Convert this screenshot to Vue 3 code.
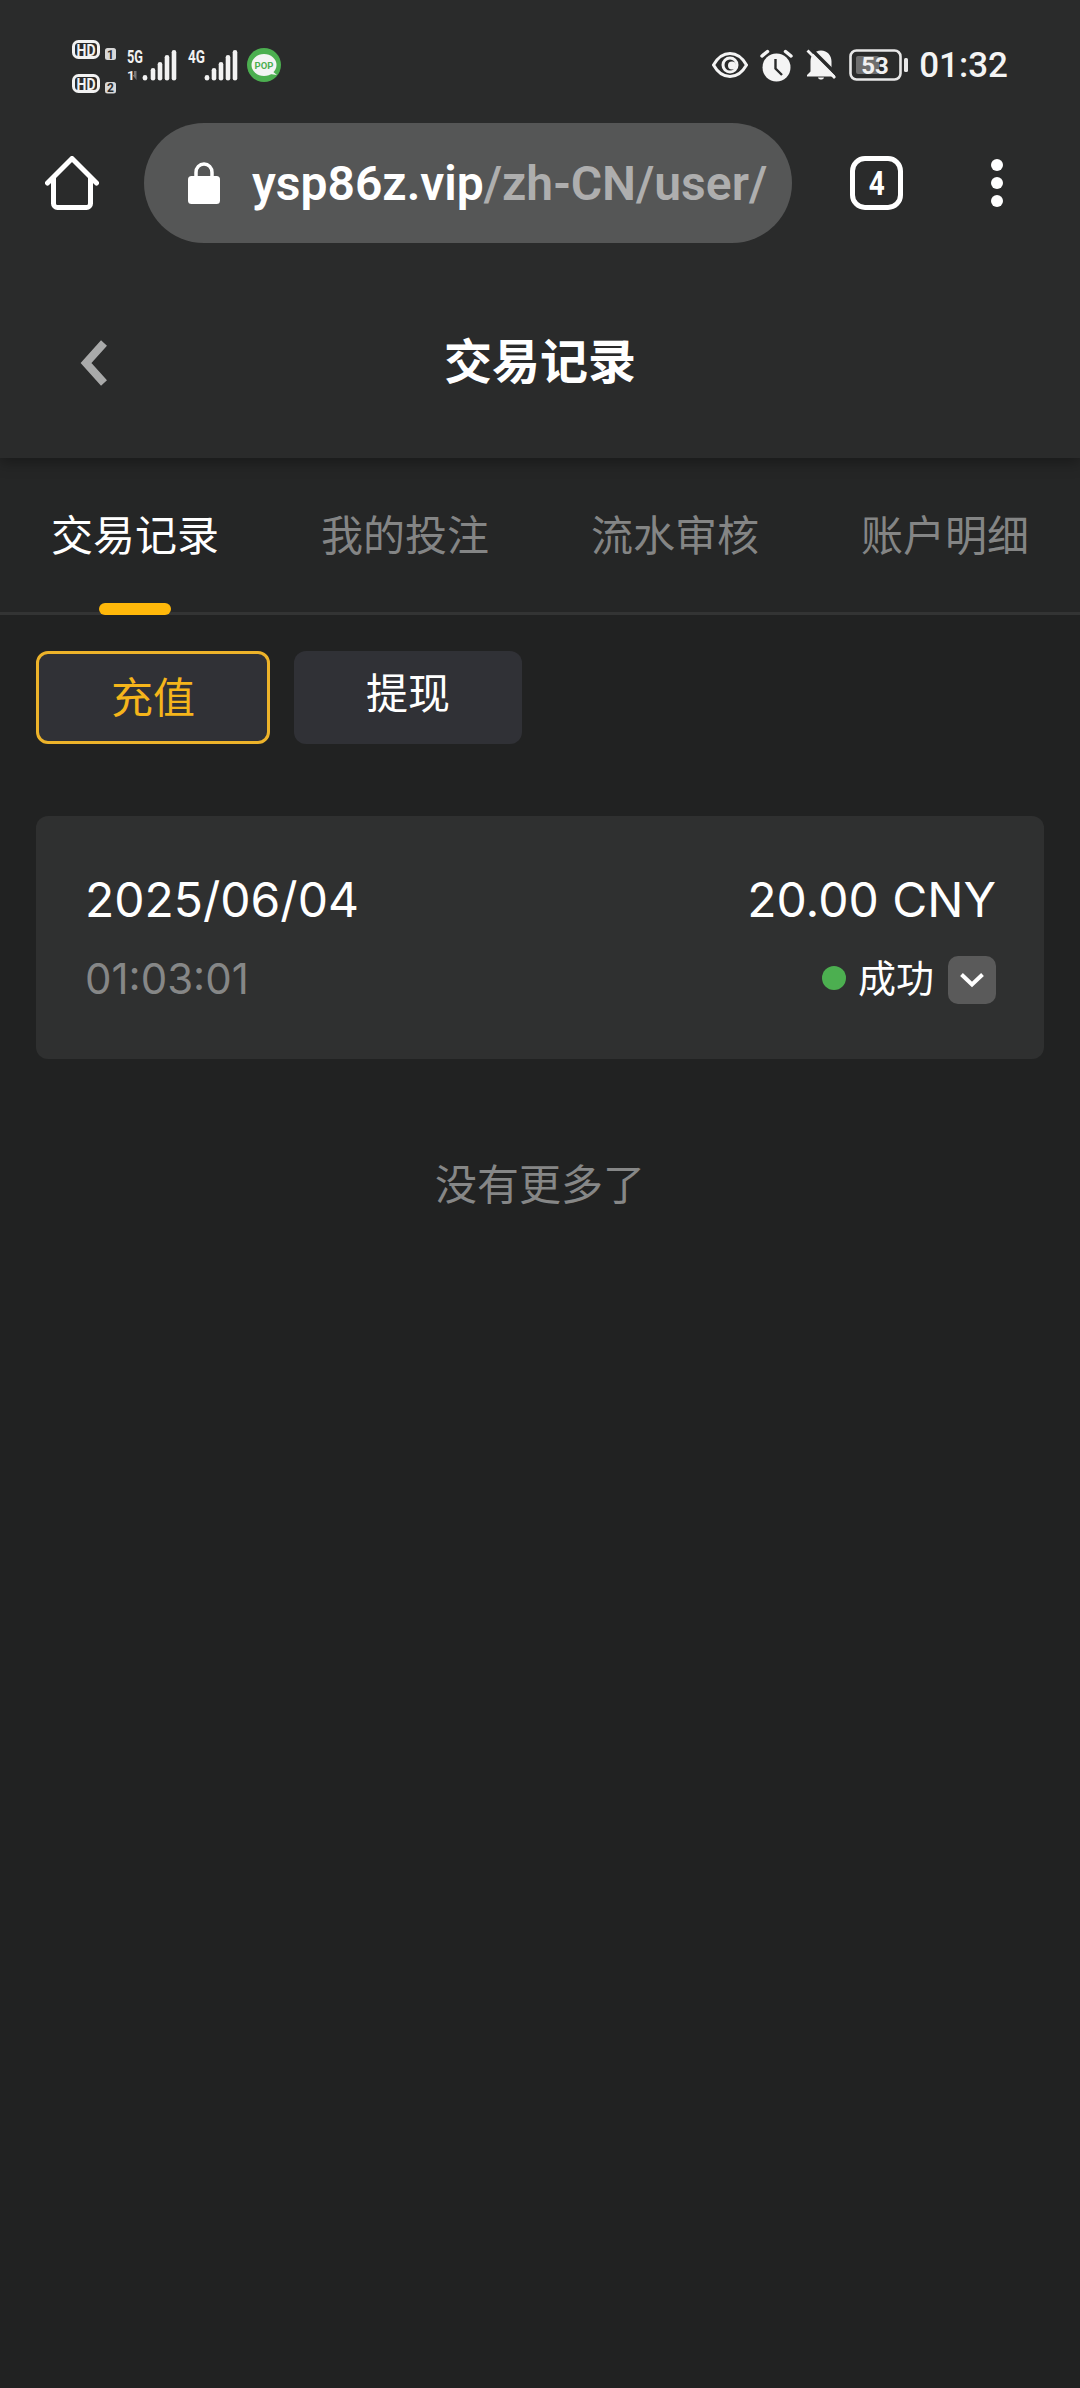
<script setup>
const tabs = ['交易记录', '我的投注', '流水审核', '账户明细']
</script>

<template>
  <div class="page">
    <div class="top">
      <div class="status">
        <svg class="left-icons" width="220" height="70" viewBox="0 0 220 70">
          <g font-family="Roboto, sans-serif" font-weight="700" fill="#f2f2f2">
            <rect x="3.500" y="5.500" width="25" height="16" rx="5" fill="none" stroke="#f2f2f2" stroke-width="3"/>
            <text x="16" y="19.500" font-size="17" text-anchor="middle" textLength="19" lengthAdjust="spacingAndGlyphs">HD</text>
            <rect x="35" y="12" width="11" height="12" rx="2.500" fill="#d8d8d8"/>
            <text x="40.500" y="22.500" font-size="12" text-anchor="middle" fill="#2a2b2b">1</text>
            <rect x="3.500" y="39.500" width="25" height="16" rx="5" fill="none" stroke="#f2f2f2" stroke-width="3"/>
            <text x="16" y="53.500" font-size="17" text-anchor="middle" textLength="19" lengthAdjust="spacingAndGlyphs">HD</text>
            <rect x="35" y="46" width="11" height="11.500" rx="2.500" fill="#d8d8d8"/>
            <text x="40.500" y="56" font-size="12" text-anchor="middle" fill="#2a2b2b">2</text>
            <text x="57" y="27" font-size="18.500" textLength="16" lengthAdjust="spacingAndGlyphs">5G</text>
            <text x="57" y="44" font-size="13.500">1</text>
            <path d="M64 35v4h-1.500l4 5V35z" fill="#777"/>
            <text x="118" y="27" font-size="18.500" textLength="17" lengthAdjust="spacingAndGlyphs">4G</text>
          </g>
          <g fill="#f2f2f2">
            <rect x="72.700" y="39" width="4.600" height="5.500" rx="2.300"/>
            <rect x="80.700" y="32" width="4.600" height="12.500" rx="2.300"/>
            <rect x="87.700" y="26" width="4.600" height="18.500" rx="2.300"/>
            <rect x="94.700" y="19" width="4.600" height="25.500" rx="2.300"/>
            <rect x="101.700" y="14" width="4.600" height="30.500" rx="2.300"/>
            <rect x="134.700" y="39" width="4.600" height="5.500" rx="2.300"/>
            <rect x="141.700" y="32" width="4.600" height="12.500" rx="2.300"/>
            <rect x="148.700" y="26" width="4.600" height="18.500" rx="2.300"/>
            <rect x="155.700" y="19" width="4.600" height="25.500" rx="2.300"/>
            <rect x="162.700" y="14" width="4.600" height="30.500" rx="2.300"/>
          </g>
          <circle cx="194" cy="29" r="17" fill="#4caf50"/>
          <ellipse cx="194" cy="29" rx="12.500" ry="11" fill="#f4f4f4"/>
          <path d="M202 35l5 4-7-1z" fill="#f4f4f4"/>
          <text x="194" y="32.500" font-family="Roboto, sans-serif" font-size="9.500" font-weight="700" text-anchor="middle" fill="#4caf50">POP</text>
        </svg>

        <div class="right-icons">
          <svg width="36" height="28" viewBox="0 0 36 28">
            <path d="M1.500 14C6 6 11.500 2.500 18 2.500S30 6 34.500 14C30 22 24.500 25.500 18 25.500S6 22 1.500 14Z" fill="none" stroke="#f4f4f4" stroke-width="3"/>
            <circle cx="18" cy="14" r="8.500" fill="#f4f4f4"/>
            <circle cx="18" cy="14" r="5.500" fill="#2a2b2b"/>
            <circle cx="20" cy="14.500" r="4" fill="#f4f4f4"/>
          </svg>
          <svg width="33" height="33" viewBox="0 0 33 33">
            <circle cx="16.500" cy="18.500" r="14" fill="#f4f4f4"/>
            <path d="M15.500 10v9.500l6.500 6.500" fill="none" stroke="#2a2b2b" stroke-width="2.400"/>
            <path d="M2 7 7.500 2.500M31 7 25.500 2.500" stroke="#f4f4f4" stroke-width="3.500" stroke-linecap="round"/>
          </svg>
          <svg width="32" height="33" viewBox="0 0 32 33">
            <path d="M16 1.500c6.500 0 10.500 5 10.500 11v10l3.500 3.500v1.500H2V26l3.500-3.500v-10c0-6 4-11 10.500-11Z" fill="#f4f4f4"/>
            <path d="M13 28.500h6c-.5 2.800-5.500 2.800-6 0Z" fill="#f4f4f4"/>
            <path d="M5 -1l27 27" stroke="#2a2b2b" stroke-width="3.500"/>
            <path d="M2.500 1.500 30 29" stroke="#f4f4f4" stroke-width="2.800"/>
          </svg>
          <svg class="battery" width="60" height="32" viewBox="0 0 60 32">
            <rect x="1.500" y="1.500" width="50" height="29" rx="6" fill="none" stroke="#e8e8e8" stroke-width="2.600"/>
            <rect x="7" y="7" width="23" height="18" rx="2" fill="#6e6e6e"/>
            <rect x="55" y="9" width="4" height="14" rx="1.500" fill="#e8e8e8"/>
            <text x="26" y="24.500" font-family="Roboto, sans-serif" font-size="24" font-weight="700" text-anchor="middle" fill="#f0f0f0">53</text>
          </svg>
          <span class="clock">01:32</span>
        </div>
      </div>

      <div class="toolbar">
        <svg class="home" width="54" height="54" viewBox="0 0 54 54">
          <path d="M2.500 27 27 2.500 51.500 27" fill="none" stroke="#fff" stroke-width="5" stroke-linecap="round" stroke-linejoin="round"/>
          <path d="M8.500 22v25.500a4 4 0 0 0 4 4h29a4 4 0 0 0 4-4V22" fill="none" stroke="#fff" stroke-width="5"/>
        </svg>
        <div class="url">
          <svg width="32" height="42" viewBox="0 0 32 42">
            <path d="M8 15V10.500C8 5.500 11.500 2 16 2s8 3.500 8 8.500V15" fill="none" stroke="#fff" stroke-width="3.500"/>
            <rect x="0" y="14" width="32" height="28" rx="3.500" fill="#fff"/>
          </svg>
          <span class="url-text"><b>ysp86z.vip</b>/zh-CN/user/</span>
        </div>
        <div class="tab-count"><span>4</span></div>
        <div class="dots"><i></i><i></i><i></i></div>
      </div>

      <header class="head">
        <svg class="back" width="30" height="46" viewBox="0 0 30 46">
          <path d="M24 3 6 23l18 20" fill="none" stroke="#a9aaaa" stroke-width="8"/>
        </svg>
        <h1>交易记录</h1>
      </header>
    </div>

    <nav class="tabs">
      <div v-for="(t, i) in tabs" :key="t" class="tab" :class="{ on: i === 0 }">{{ t }}</div>
    </nav>

    <main class="body">
      <div class="filters">
        <button class="filter active">充值</button>
        <button class="filter">提现</button>
      </div>

      <section class="card">
        <div class="row">
          <span class="date">2025/06/04</span>
          <span class="amount">20.00 CNY</span>
        </div>
        <div class="row second">
          <span class="time">01:03:01</span>
          <span class="state">
            <i class="dot"></i>
            <span class="ok">成功</span>
            <span class="more">
              <svg width="24" height="16" viewBox="0 0 24 16">
                <path d="M1.500 2.500 12 12.500l10.500-10" fill="none" stroke="#fff" stroke-width="4"/>
              </svg>
            </span>
          </span>
        </div>
      </section>

      <p class="end">没有更多了</p>
    </main>
  </div>
</template>

<style>
html, body { margin: 0; background: #212222; }
</style>

<style scoped>
.page {
  width: 1080px;
  height: 2388px;
  overflow: hidden;
  background: #212222;
  color: #fff;
  font-family: Inter, "Noto Sans CJK SC", sans-serif;
}
.top {
  position: relative;
  z-index: 1;
  background: #2a2b2b;
  box-shadow: 0 4px 14px rgba(0, 0, 0, .35);
}
.status {
  height: 123px;
  box-sizing: border-box;
  padding: 36px 72px 0 70px;
  display: flex;
  justify-content: space-between;
  align-items: flex-start;
}
.right-icons {
  display: flex;
  align-items: center;
  height: 58px;
}
.right-icons svg { margin-right: 12px; }
.right-icons svg.battery { margin-right: 10px; }
.clock {
  font: 500 35px Roboto, sans-serif;
  color: #f4f4f4;
}
.toolbar {
  height: 147px;
  box-sizing: border-box;
  padding-left: 45px;
  display: flex;
  align-items: flex-start;
}
.home { margin-top: 33px; }
.url {
  margin-left: 45px;
  width: 648px;
  height: 120px;
  box-sizing: border-box;
  padding-left: 44px;
  border-radius: 60px;
  background: #555656;
  display: flex;
  align-items: center;
  overflow: hidden;
}
.url-text {
  margin-left: 32px;
  font: 600 48px Roboto, sans-serif;
  color: #aeaeae;
  white-space: nowrap;
}
.url-text b { font-weight: 600; color: #fff; }
.tab-count {
  margin: 33px 0 0 58px;
  width: 53px;
  height: 54px;
  box-sizing: border-box;
  border: 5px solid #fff;
  border-radius: 15px;
  display: flex;
  align-items: center;
  justify-content: center;
}
.tab-count span {
  font: 700 34px "Roboto", sans-serif;
  transform: scaleX(.82);
}
.dots {
  margin: 36px 0 0 88px;
  display: flex;
  flex-direction: column;
  gap: 6px;
}
.dots i {
  width: 12px;
  height: 12px;
  border-radius: 50%;
  background: #fff;
}
.head {
  height: 188px;
  display: flex;
  align-items: center;
  justify-content: center;
  position: relative;
}
.back {
  position: absolute;
  left: 80px;
  top: 70px;
}
.head h1 {
  margin: 0 0 12px;
  font-size: 48px;
  font-weight: 700;
  line-height: 60px;
  font-family: "Noto Sans CJK SC", sans-serif;
}
.tabs {
  height: 157px;
  box-sizing: border-box;
  border-bottom: 3px solid #333434;
  background: #252626;
  display: flex;
}
.tab {
  position: relative;
  flex: 1;
  padding-top: 45px;
  text-align: center;
  font: 42px/60px "Noto Sans CJK SC", sans-serif;
  color: #848585;
}
.tab.on { color: #fff; }
.tab.on::after {
  content: "";
  position: absolute;
  left: 99px;
  bottom: -3px;
  width: 72px;
  height: 12px;
  border-radius: 6px;
  background: #ffb80a;
}
.body { padding: 36px; }
.filters { display: flex; gap: 24px; }
.filter {
  height: 93px;
  padding: 0 72px 14px;
  border: 0;
  border-radius: 12px;
  background: #303136;
  color: #fff;
  font: 42px/60px "Noto Sans CJK SC", sans-serif;
}
.filter.active {
  padding: 0 72px 6px;
  border: 3px solid #edb32a;
  color: #f5b51b;
}
.card {
  margin-top: 72px;
  height: 243px;
  box-sizing: border-box;
  padding: 54px 48px 0 49px;
  border-radius: 12px;
  background: #2f3030;
}
.row {
  display: flex;
  justify-content: space-between;
  align-items: center;
  height: 58px;
}
.row.second { margin-top: 26px; height: 48px; }
.date, .amount { font-size: 48px; }
.time { font-size: 42px; color: #868787; }
.state { display: flex; align-items: center; }
.dot {
  width: 24px;
  height: 24px;
  border-radius: 50%;
  background: #4caf50;
}
.ok {
  margin: 0 14px 4px 12px;
  font: 38px/48px "Noto Sans CJK SC", sans-serif;
}
.more {
  margin-top: 4px;
  width: 48px;
  height: 48px;
  border-radius: 10px;
  background: #5a5a5a;
  display: flex;
  align-items: center;
  justify-content: center;
}
.end {
  margin: 93px 0 0;
  text-align: center;
  font: 42px/60px "Noto Sans CJK SC", sans-serif;
  color: #868787;
}
</style>
